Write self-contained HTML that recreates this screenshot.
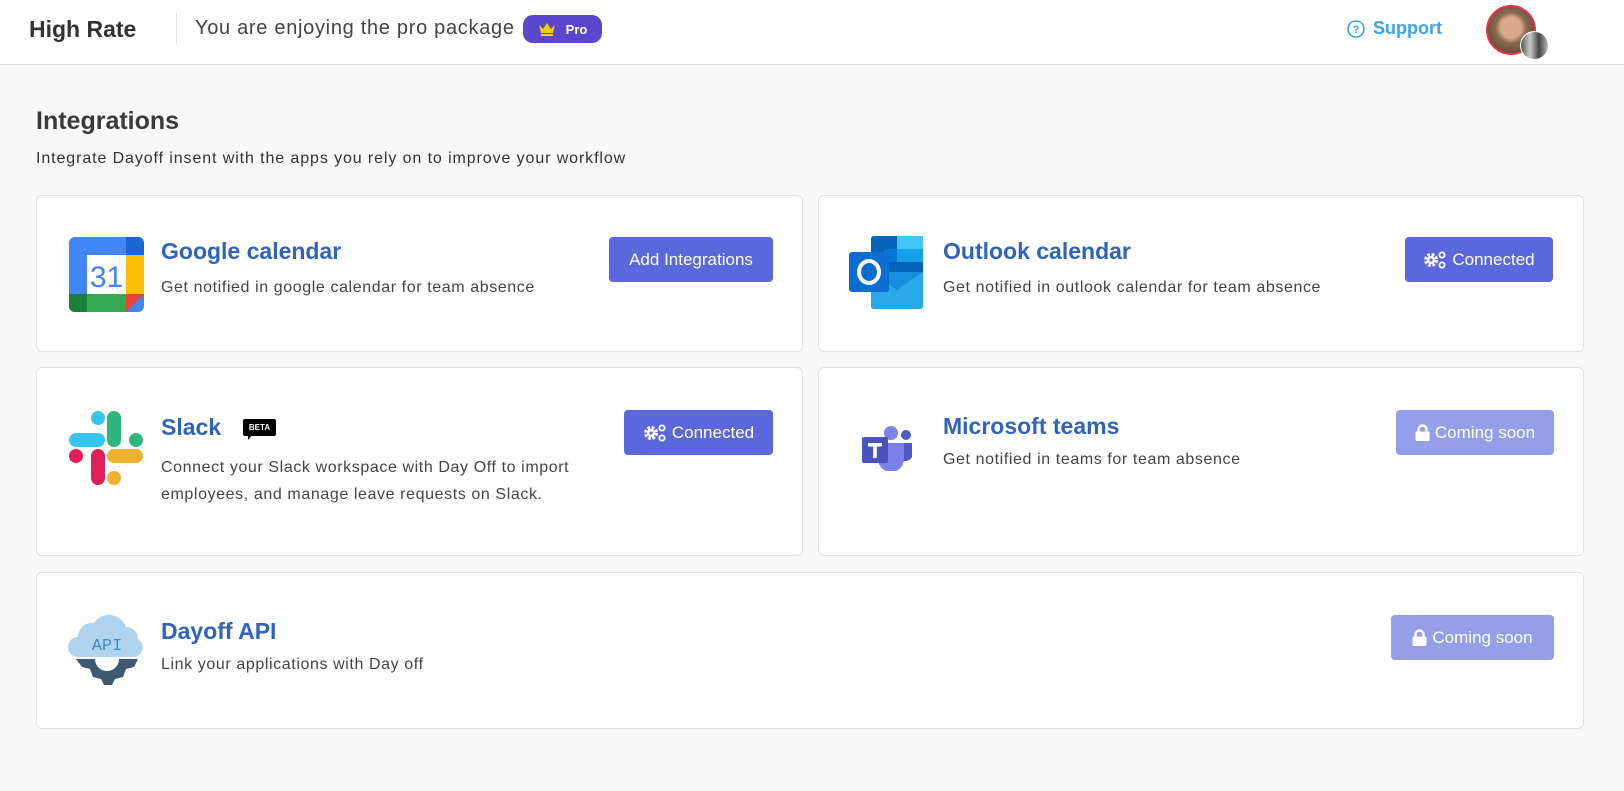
<!DOCTYPE html>
<html><head><meta charset="utf-8"><style>
*{margin:0;padding:0;box-sizing:border-box}
body{width:1624px;height:791px;background:#f8f8f8;font-family:"Liberation Sans",sans-serif;color:#3a3a3a;position:relative;overflow:hidden}
.hdr{position:absolute;left:0;top:0;width:1624px;height:65px;background:#fff;border-bottom:1px solid #e0e0e0}
.a{position:absolute;white-space:nowrap}
.card{position:absolute;background:#fff;border:1px solid #e2e2e2;border-radius:6px}
.t{position:absolute;font-size:23px;font-weight:bold;color:#2f63be;white-space:nowrap}
.d{position:absolute;font-size:16px;letter-spacing:0.6px;color:#444;white-space:nowrap;line-height:27px}
.btn{position:absolute;height:45px;border-radius:4px;background:#5a67dd;color:#fff;font-size:17px;display:flex;align-items:center;justify-content:center;gap:5px}
.dis{background:#949ee9}
</style></head><body>
<div class="hdr">
 <div class="a" style="left:29px;top:16px;font-size:23px;font-weight:bold;color:#333">High Rate</div>
 <div class="a" style="left:176px;top:13px;width:1px;height:32px;background:#e2e2e2"></div>
 <div class="a" style="left:195px;top:17px;font-size:20px;letter-spacing:0.7px;color:#444">You are enjoying the pro package</div>
 <div class="a" style="left:523px;top:15px;width:79px;height:28px;border-radius:10px;background:#5b46d0;color:#fff;font-size:13px;font-weight:bold;display:flex;align-items:center;justify-content:center;gap:10px">
  <svg width="18" height="16" viewBox="0 0 18 16"><path d="M1 4l4 4 4-6 4 6 4-4-2 8H3z" fill="#f5d000"/><rect x="3" y="13" width="12" height="2" fill="#f5d000"/></svg>Pro</div>
 <div class="a" style="left:1347px;top:18px;font-size:18px;font-weight:bold;color:#3aa3ef;display:flex;align-items:center;gap:8px">
  <svg width="18" height="18" viewBox="0 0 18 18"><circle cx="9" cy="9" r="8" fill="none" stroke="#3aa3ef" stroke-width="1.6"/><text x="9" y="13" font-size="11" font-weight="bold" text-anchor="middle" fill="#3aa3ef" font-family="Liberation Sans">?</text></svg>Support</div>
 <div class="a" style="left:1486px;top:5px;width:50px;height:50px;border-radius:50%;border:2px solid #f0304a;background:radial-gradient(circle at 50% 45%,#d9a98c 0 30%,#8a6a50 45%,#6b5340 70%)"></div>
 <div class="a" style="left:1520px;top:31px;width:29px;height:29px;border-radius:50%;background:linear-gradient(90deg,#555,#ccc,#444,#bbb);border:1px solid #fff"></div>
</div>

<div class="a" style="left:36px;top:107px;font-size:25px;font-weight:bold;color:#3a3a3a">Integrations</div>
<div class="a" style="left:36px;top:150px;font-size:16px;letter-spacing:0.9px;color:#333">Integrate Dayoff insent with the apps you rely on to improve your workflow</div>

<!-- Google -->
<div class="card" style="left:36px;top:195px;width:767px;height:157px">
 <svg class="a" style="left:32px;top:41px" width="75" height="75" viewBox="0 0 75 75">
  <rect x="0" y="0" width="75" height="75" rx="6" fill="#4285f4"/>
  <path d="M57 0h12a6 6 0 0 1 6 6v12H57z" fill="#1967d2"/>
  <rect x="57" y="18" width="18" height="39" fill="#fbbc04"/>
  <path d="M0 57h57v18H6a6 6 0 0 1-6-6z" fill="#34a853"/>
  <path d="M0 57h18v18H6a6 6 0 0 1-6-6z" fill="#188038"/>
  <path d="M57 57h18L57 75z" fill="#ea4335"/>
  <rect x="18" y="18" width="39" height="39" fill="#fff"/>
  <text x="37.5" y="50" font-size="30" text-anchor="middle" fill="#4285f4" font-family="Liberation Sans Narrow, Liberation Sans">31</text>
 </svg>
 <div class="t" style="left:124px;top:42px">Google calendar</div>
 <div class="d" style="left:124px;top:78px">Get notified in google calendar for team absence</div>
 <div class="btn" style="left:572px;top:41px;width:164px">Add Integrations</div>
</div>

<!-- Outlook -->
<div class="card" style="left:818px;top:195px;width:766px;height:157px">
 <svg class="a" style="left:30px;top:40px" width="78" height="76" viewBox="0 0 78 76">
  <rect x="22" y="0" width="52" height="40" rx="3" fill="#0364b8"/>
  <rect x="48" y="0" width="26" height="13" fill="#28a8ea"/>
  <rect x="48" y="13" width="26" height="13" fill="#14a0e8"/>
  <rect x="35" y="13" width="13" height="13" fill="#0078d4"/>
  <rect x="48" y="0" width="26" height="13" fill="#50d9ff" opacity=".6"/>
  <path d="M22 36h52v34a3 3 0 0 1-3 3H25a3 3 0 0 1-3-3z" fill="#1490df"/>
  <path d="M22 36l26 18 26-18v34a3 3 0 0 1-3 3H25a3 3 0 0 1-3-3z" fill="#28a8ea"/>
  <rect x="0" y="16" width="40" height="40" rx="3" fill="#0a6ed1"/>
  <ellipse cx="20" cy="36" rx="10" ry="11" fill="none" stroke="#fff" stroke-width="4"/>
 </svg>
 <div class="t" style="left:124px;top:42px">Outlook calendar</div>
 <div class="d" style="left:124px;top:78px">Get notified in outlook calendar for team absence</div>
 <div class="btn" style="left:586px;top:41px;width:148px"><svg width="24" height="18" viewBox="0 0 24 18"><circle cx="8" cy="9" r="5" fill="none" stroke="#fff" stroke-width="4" stroke-dasharray="2.5 1.5"/><circle cx="8" cy="9" r="4" fill="#fff"/><circle cx="8" cy="9" r="1.6" fill="#5a67dd"/><circle cx="19" cy="4" r="2.6" fill="none" stroke="#fff" stroke-width="1.8"/><circle cx="19" cy="14" r="2.6" fill="none" stroke="#fff" stroke-width="1.8"/></svg>Connected</div>
</div>

<!-- Slack -->
<div class="card" style="left:36px;top:367px;width:767px;height:189px">
 <svg class="a" style="left:31px;top:42px" width="76" height="76" viewBox="0 0 76 76">
  <g stroke-linecap="round" stroke-width="14" fill="none">
   <path d="M8 30h22" stroke="#36c5f0"/><path d="M30 8h0" stroke="#36c5f0"/>
   <path d="M46 8v22" stroke="#2eb67d"/><path d="M68 30h0" stroke="#2eb67d"/>
   <path d="M46 46h22" stroke="#ecb22e"/><path d="M46 68h0" stroke="#ecb22e"/>
   <path d="M30 46v22" stroke="#e01e5a"/><path d="M8 46h0" stroke="#e01e5a"/>
  </g>
 </svg>
 <div class="t" style="left:124px;top:46px">Slack</div>
 <div class="a" style="left:206px;top:51px;width:33px;height:17px;background:#000;color:#fff;font-size:8px;font-weight:bold;display:flex;align-items:center;justify-content:center;border-radius:2px">BETA</div>
 <div class="a" style="left:211px;top:67px;width:0;height:0;border-left:4px solid #000;border-right:4px solid transparent;border-bottom:5px solid transparent"></div>
 <div class="d" style="left:124px;top:86px">Connect your Slack workspace with Day Off to import<br>employees, and manage leave requests on Slack.</div>
 <div class="btn" style="left:587px;top:42px;width:149px"><svg width="24" height="18" viewBox="0 0 24 18"><circle cx="8" cy="9" r="5" fill="none" stroke="#fff" stroke-width="4" stroke-dasharray="2.5 1.5"/><circle cx="8" cy="9" r="4" fill="#fff"/><circle cx="8" cy="9" r="1.6" fill="#5a67dd"/><circle cx="19" cy="4" r="2.6" fill="none" stroke="#fff" stroke-width="1.8"/><circle cx="19" cy="14" r="2.6" fill="none" stroke="#fff" stroke-width="1.8"/></svg>Connected</div>
</div>

<!-- Teams -->
<div class="card" style="left:818px;top:367px;width:766px;height:189px">
 <svg class="a" style="left:43px;top:57px" width="52" height="46" viewBox="0 0 52 46">
  <circle cx="44" cy="10" r="5" fill="#5059c9"/>
  <path d="M36 18h14v14a8 8 0 0 1-14 0z" fill="#5059c9"/>
  <circle cx="29" cy="8" r="7" fill="#7b83eb"/>
  <path d="M16 18h26v16a13 13 0 0 1-26 0z" fill="#7b83eb"/>
  <rect x="0" y="12" width="26" height="26" rx="2" fill="#4b53bc"/>
  <path d="M6 18h14v3.5h-5.2V33h-3.6V21.5H6z" fill="#fff"/>
 </svg>
 <div class="t" style="left:124px;top:45px">Microsoft teams</div>
 <div class="d" style="left:124px;top:78px">Get notified in teams for team absence</div>
 <div class="btn dis" style="left:577px;top:42px;width:158px"><svg width="15" height="17" viewBox="0 0 15 17"><path d="M3.5 8V5.5a4 4 0 0 1 8 0V8" fill="none" stroke="#fff" stroke-width="2.4"/><rect x="0.5" y="7.5" width="14" height="9.5" rx="1.5" fill="#fff"/></svg>Coming soon</div>
</div>

<!-- API -->
<div class="card" style="left:36px;top:572px;width:1548px;height:157px">
 <svg class="a" style="left:31px;top:42px" width="78" height="72" viewBox="0 0 78 72">
  <g fill="#3f5a6e">
   <path d="M8 44h62l-4 8-8 2-3 8-8 2-3 6h-8l-3-6-8-2-3-8-8-2z"/>
  </g>
  <circle cx="39" cy="44" r="12" fill="#fff"/>
  <path d="M10 42a10 10 0 0 1 0-20a14 14 0 0 1 16-14a18 18 0 0 1 32 4a12 12 0 0 1 12 12a10 10 0 0 1-2 18z" fill="#b0d4ef"/>
  <text x="39" y="35" font-size="17" text-anchor="middle" fill="#3b8fd2" font-family="Liberation Mono">API</text>
 </svg>
 <div class="t" style="left:124px;top:45px">Dayoff API</div>
 <div class="d" style="left:124px;top:78px">Link your applications with Day off</div>
 <div class="btn dis" style="left:1354px;top:42px;width:163px"><svg width="15" height="17" viewBox="0 0 15 17"><path d="M3.5 8V5.5a4 4 0 0 1 8 0V8" fill="none" stroke="#fff" stroke-width="2.4"/><rect x="0.5" y="7.5" width="14" height="9.5" rx="1.5" fill="#fff"/></svg>Coming soon</div>
</div>
</body></html>
